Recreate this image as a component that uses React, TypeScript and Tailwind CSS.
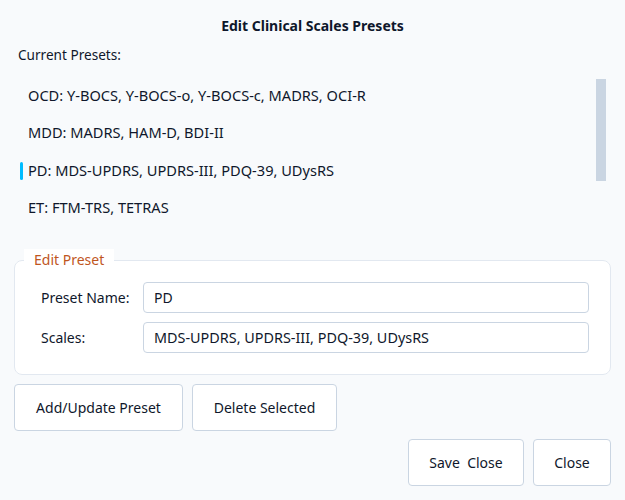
const presets = [
  "OCD: Y-BOCS, Y-BOCS-o, Y-BOCS-c, MADRS, OCI-R",
  "MDD: MADRS, HAM-D, BDI-II",
  "PD: MDS-UPDRS, UPDRS-III, PDQ-39, UDysRS",
  "ET: FTM-TRS, TETRAS",
];

const selected = 2;

const App = () => {
  return (
    <div className="h-[500px] w-[625px] bg-slate-50 font-['Noto_Sans',sans-serif] text-[14px] text-slate-900">
      <h1 className="pt-[16px] text-center text-[14px] font-bold leading-[20px]">
        Edit Clinical Scales Presets
      </h1>

      <div className="mt-[9px] pl-[18px] text-[13.6px] leading-[20px]">Current Presets:</div>

      <div className="mt-[12px] flex h-[152px] pl-[16px] pr-[19px]">
        <ul className="flex flex-1 flex-col text-[14.6px]">
          {presets.map((p, i) => (
            <li key={p} className="relative flex h-[37.5px] shrink-0 items-center pl-[12px]">
              {i === selected && (
                <span className="absolute left-[4px] top-[10px] h-[18px] w-[3px] rounded-sm bg-sky-400" />
              )}
              {p}
            </li>
          ))}
        </ul>
        <div className="w-[10px] pt-[2px]">
          <div className="h-[102px] w-[10px] bg-slate-300" />
        </div>
      </div>

      <fieldset className="relative mx-[14px] mt-[31px] rounded-lg border border-slate-200 bg-white pb-[21px] pl-[26px] pr-[21px] pt-[21px]">
        <legend className="absolute left-[9px] top-[-12px] bg-white px-[10px] pt-[1px] leading-[20px] text-[#c0561e]">
          Edit Preset
        </legend>
        <div className="flex flex-col gap-[9px]">
          <div className="flex items-center">
            <label className="w-[102px]">Preset Name:</label>
            <input
              readOnly
              value="PD"
              className="h-[31px] flex-1 rounded border border-slate-300 bg-white px-[10px] outline-none"
            />
          </div>
          <div className="flex items-center">
            <label className="w-[102px]">Scales:</label>
            <input
              readOnly
              value="MDS-UPDRS, UPDRS-III, PDQ-39, UDysRS"
              className="h-[31px] flex-1 rounded border border-slate-300 bg-white px-[10px] text-[14.4px] outline-none"
            />
          </div>
        </div>
      </fieldset>

      <div className="mt-[9px] flex gap-[9px] px-[14px]">
        <button className="h-[47px] w-[169px] rounded border border-slate-300 bg-white">
          Add/Update Preset
        </button>
        <button className="h-[47px] w-[145px] rounded border border-slate-300 bg-white">
          Delete Selected
        </button>
      </div>

      <div className="mt-[8px] flex justify-end gap-[9px] px-[14px]">
        <button className="h-[47px] w-[116px] whitespace-pre rounded border border-slate-300 bg-white">
          {"Save  Close"}
        </button>
        <button className="h-[47px] w-[78px] rounded border border-slate-300 bg-white">Close</button>
      </div>
    </div>
  );
};

export default App;
